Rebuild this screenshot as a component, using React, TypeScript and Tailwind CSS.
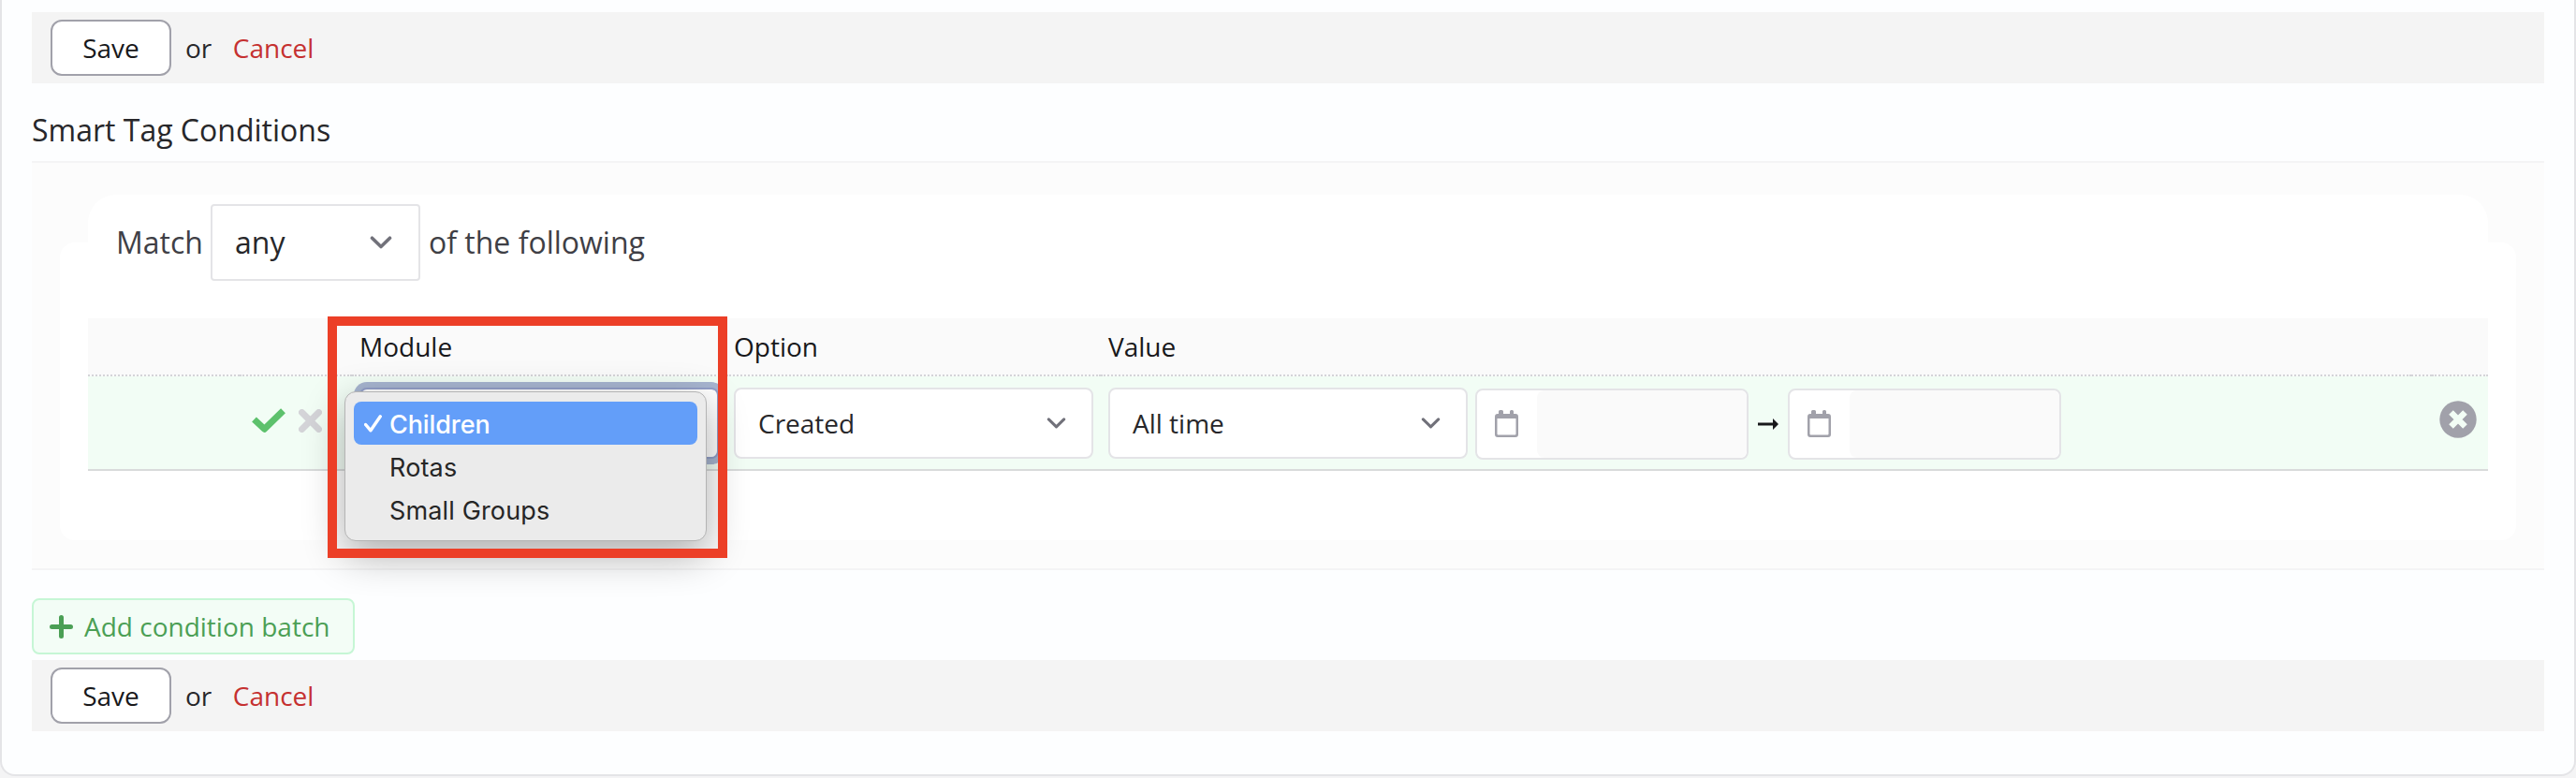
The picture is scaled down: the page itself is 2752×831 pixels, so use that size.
import React from "react";

function Chevron({ big = false }: { big?: boolean }) {
  return (
    <svg
      className={big ? "h-[14px] w-[24px]" : "h-[12px] w-[21px]"}
      viewBox="0 0 24 14"
      fill="none"
      stroke="#71717a"
      strokeWidth="3.6"
      strokeLinecap="round"
      strokeLinejoin="round"
    >
      <path d="M2.5 2.2 12 11.5 21.5 2.2" />
    </svg>
  );
}

function ActionBar() {
  return (
    <div className="flex h-[76px] items-center bg-[#f4f4f4] pl-5 text-[28px] text-[#27272a]">
      <button className="h-[60px] w-[129px] rounded-xl border-2 border-[#a1a1aa] bg-white leading-none text-[#18181b]">
        Save
      </button>
      <span className="ml-[15px] leading-none">or</span>
      <a className="ml-[22.5px] leading-none text-[#c53030]">Cancel</a>
    </div>
  );
}

function SelectBox({ label }: { label: string }) {
  return (
    <div className="flex h-[76px] w-[384px] items-center justify-between rounded-lg border-2 border-[#e4e4e7] bg-white pl-6 pr-[27px] text-[28px] text-[#27272a]">
      <span className="leading-none">{label}</span>
      <Chevron />
    </div>
  );
}

function DateBox() {
  return (
    <div className="mt-px flex h-[76px] w-[292px] overflow-hidden rounded-lg border-2 border-[#e4e4e7] bg-white">
      <div className="w-16 pl-[19px] pt-[21px]">
        <svg className="h-[29px] w-[25px]" viewBox="0 0 25 29" fill="#a1a1aa">
          <path d="M5.500 0h2q1.500 0 1.500 1.500V4h7V1.500Q16 0 17.500 0h1Q20 0 20 1.500V4h2q3 0 3 3v19q0 3-3 3H3q-3 0-3-3V7q0-3 3-3h1V1.500Q4 0 5.500 0ZM2.500 9v16.500q0 1 1 1h18q1 0 1-1V9Z" />
        </svg>
      </div>
      <div className="grow rounded-lg bg-[#fafafa]" />
    </div>
  );
}

const headCell = "flex h-[62px] border-b-2 border-dotted border-[#d4d4d8] bg-[#fafafa] pl-2 text-[28px] text-[#18181b]";
const bodyCell = "flex h-[101px] border-b-2 border-[#d9dbdb] bg-[#f2fdf5]";

function ModulePopup() {
  return (
    <div className="absolute left-[-8px] top-[16px] h-[160px] w-[387px] rounded-xl border border-[#b4b4b4] bg-[#ebebeb] px-[9px] pt-[10px] font-['Inter',sans-serif] text-[27px] tracking-[0.15px] text-[#262626] shadow-[0_14px_44px_rgba(0,0,0,0.32)]">
      <div className="flex h-[46px] items-center rounded-lg bg-[#639ef9] pl-[11px] text-white">
        <svg className="mr-2 h-[19px] w-[19px]" viewBox="0 0 19 19" fill="none" stroke="white" strokeWidth="3.4" strokeLinecap="round" strokeLinejoin="round">
          <path d="M1.600 10.500 7 16.800 17.300 1.800" />
        </svg>
        <span className="pt-[4px] font-medium tracking-[-0.1px]">Children</span>
      </div>
      <div className="flex h-[46px] items-center pl-[38px] pt-[5px]">Rotas</div>
      <div className="flex h-[46px] items-center pl-[38px] pt-[5px]">Small Groups</div>
    </div>
  );
}

export default function App() {
  return (
    <div className="h-[831px] w-[2752px] overflow-hidden bg-[#f4f4f5] font-['Open_Sans',sans-serif]">
      <div className="h-[829px] rounded-b-2xl border-2 border-t-0 border-[#e4e4e7] bg-[#fdfeff] px-8 pt-[13px]">
        <ActionBar />
        <div className="flex h-[83px] items-center pt-[18px] text-[32px] leading-none text-[#27272a] pb-[1px]">
          <h2>Smart Tag Conditions</h2>
        </div>
        <section className="h-[437px] border-y-2 border-[#f4f4f5] bg-[#fcfcfc] px-[30px] pt-[34px]">
          <div className="mx-[30px] h-[51px] rounded-t-[30px] bg-white" />
          <div className="flex h-[318px] flex-col rounded-2xl bg-white px-[30px]">
            <div className="relative -mt-[41px] flex h-[82px] w-fit items-center pl-[30px] text-[32px] leading-none text-[#3f3f46]">
              <span className="w-[101px]">Match</span>
              <div className="flex h-[82px] w-[224px] items-center justify-between rounded border-2 border-[#e4e4e7] bg-white pl-6 pr-[28px] text-[#27272a]">
                <span>any</span>
                <Chevron big />
              </div>
              <span className="ml-[9px]">of the following</span>
            </div>
            <div className="relative mt-10 grid w-[2564px] grid-cols-[162px_120px_400px_400px_1400px_22px_60px]">
              <div className={headCell} />
              <div className={headCell} />
              <div className={headCell}><span className="pt-[9px]">Module</span></div>
              <div className={headCell}><span className="pt-[9px]">Option</span></div>
              <div className={headCell}><span className="pt-[9px]">Value</span></div>
              <div className={headCell} />
              <div className={headCell} />

              <div className={bodyCell} />
              <div className={bodyCell}>
                <svg className="ml-[13px] mt-[34px] h-[27px] w-[36px]" viewBox="0 0 36 27" fill="none" stroke="#5dc16c" strokeWidth="7" strokeLinejoin="round">
                  <path d="M2.500 12 13.500 22.200 33.500 2.700" />
                </svg>
                <svg className="ml-[14px] mt-[35px] h-[25px] w-[25px]" viewBox="0 0 25 25" fill="none" stroke="#d4d4d8" strokeWidth="7" strokeLinecap="round">
                  <path d="M3.500 3.500 21.500 21.500M21.500 3.500 3.500 21.500" />
                </svg>
              </div>
              <div className={bodyCell + " relative z-10 pl-2 pt-3"}>
                <div className="h-[76px] w-[384px] rounded-lg border-2 border-[#939fc8] bg-white ring-6 ring-[#a7b5d0]" />
                <ModulePopup />
                <div className="absolute left-[-26px] top-[-64px] h-[258px] w-[427px] border-[10px] border-[#ec3f27]" />
              </div>
              <div className={bodyCell + " pl-2 pt-3"}><SelectBox label="Created" /></div>
              <div className={bodyCell + " pl-2 pt-3"}>
                <SelectBox label="All time" />
                <div className="w-2" />
                <DateBox />
                <svg className="mx-[10px] mt-[32px] h-[14px] w-[22px]" viewBox="0 0 22 14" fill="#18181b">
                  <path d="M0 5.500h16V1l6 6-6 6V8.500H0Z" />
                </svg>
                <DateBox />
              </div>
              <div className={bodyCell} />
              <div className={bodyCell + " pl-[8px] pt-[26px]"}>
                <svg className="h-10 w-10" viewBox="0 0 40 40">
                  <circle cx="20" cy="20" r="19.700" fill="#a1a1aa" />
                  <path d="M12.500 12.500 27.500 27.500M27.500 12.500 12.500 27.500" stroke="#f2fdf5" strokeWidth="6.500" />
                </svg>
              </div>
            </div>
          </div>
        </section>
        <button className="mb-1.5 mt-[30px] flex h-[60px] w-[345px] items-center rounded-lg border-2 border-[#c6f6d5] bg-[#f3fdf6] pl-[17px] text-[28px] leading-none text-[#4b9f55]">
          <svg className="mr-3 h-[25px] w-[25px]" viewBox="0 0 25 25" fill="none" stroke="#4b9f55" strokeWidth="5" strokeLinecap="round">
            <path d="M12.500 2.500V22.500M2.500 12.500H22.500" />
          </svg>
          Add condition batch
        </button>
        <ActionBar />
      </div>
    </div>
  );
}
